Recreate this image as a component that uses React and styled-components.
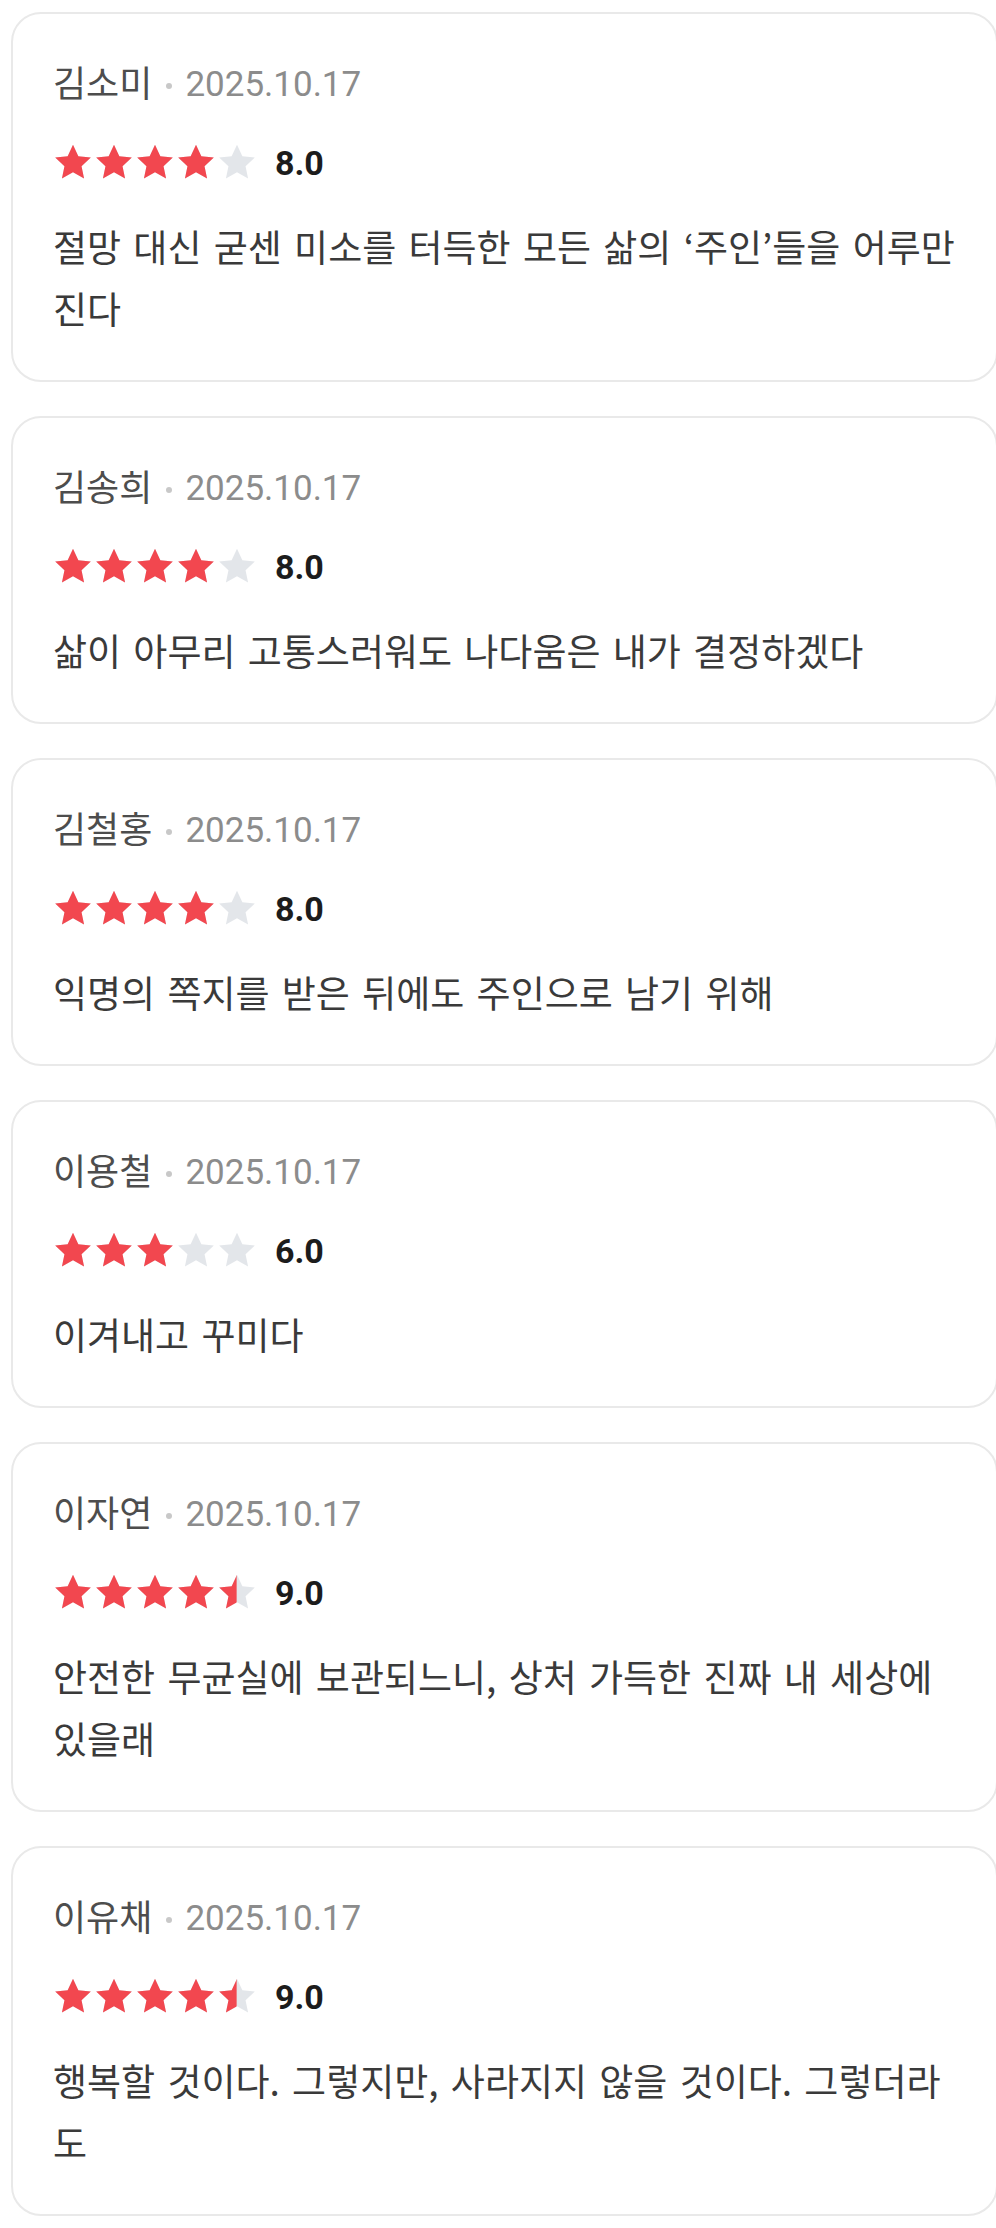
import React from "react";
import styled, { createGlobalStyle } from "styled-components";

const GlobalStyle = createGlobalStyle`
  html, body {
    margin: 0;
    padding: 0;
    background: #ffffff;
    overflow-x: hidden;
  }
  body {
    font-family: Roboto, "Noto Sans CJK KR", "Noto Sans", sans-serif;
  }
`;

const List = styled.div`
  display: flex;
  flex-direction: column;
  gap: 34px;
  padding: 12px 0 12px 11px;
`;

const Card = styled.div`
  width: 987px;
  box-sizing: border-box;
  padding: 48px 26px 41px 40px;
  border: 2px solid #e9e9e9;
  border-radius: 30px;
  background: #ffffff;
`;

const Meta = styled.div`
  display: flex;
  align-items: center;
  height: 46px;
  line-height: 46px;
`;

const Name = styled.span`
  font-size: 36px;
  color: #4d4d4d;
`;

const Dot = styled.span`
  width: 6px;
  height: 6px;
  margin: 2px 13px 0 14px;
  border-radius: 50%;
  background: #c8c8c8;
`;

const Date = styled.span`
  font-size: 35px;
  color: #8c8c8c;
`;

const RatingRow = styled.div`
  display: flex;
  align-items: center;
  height: 40px;
  margin-top: 35px;
`;

const Stars = styled.div`
  display: flex;
  gap: 1px;
`;

const Score = styled.span`
  margin-left: 18px;
  font-size: 34px;
  font-weight: 700;
  color: #1c1c1c;
`;

const Body = styled.p`
  margin: 32px 0 0;
  font-size: 37px;
  line-height: 62px;
  word-spacing: 4px;
  color: #3a3a3a;
  font-family: "Noto Sans CJK KR", "Noto Sans", sans-serif;
`;

const STAR_PATH =
  "M12 2l2.94 6.26 6.86.78-5.1 4.7 1.4 6.76L12 17.1l-6.1 3.4 1.4-6.76-5.1-4.7 6.86-.78z";

const Star = ({ fill, id }) => (
  <svg width="40" height="40" viewBox="1 1 22 22">
    <defs>
      <clipPath id={id}>
        <rect x="0" y="0" width={1.6 + 20.4 * fill} height="24" />
      </clipPath>
    </defs>
    <path d={STAR_PATH} fill="#e3e6ea" />
    {fill > 0 && <path d={STAR_PATH} fill="#f2474f" clipPath={`url(#${id})`} />}
  </svg>
);

const reviews = [
  {
    name: "김소미",
    score: 8.0,
    text: "절망 대신 굳센 미소를 터득한 모든 삶의 ‘주인’들을 어루만진다",
  },
  {
    name: "김송희",
    score: 8.0,
    text: "삶이 아무리 고통스러워도 나다움은 내가 결정하겠다",
  },
  {
    name: "김철홍",
    score: 8.0,
    text: "익명의 쪽지를 받은 뒤에도 주인으로 남기 위해",
  },
  { name: "이용철", score: 6.0, text: "이겨내고 꾸미다" },
  {
    name: "이자연",
    score: 9.0,
    text: "안전한 무균실에 보관되느니, 상처 가득한 진짜 내 세상에 있을래",
  },
  {
    name: "이유채",
    score: 9.0,
    text: "행복할 것이다. 그렇지만, 사라지지 않을 것이다. 그렇더라도",
  },
];

const Rating = ({ score, idx }) => {
  const stars = score / 2;
  return (
    <Stars>
      {[0, 1, 2, 3, 4].map((i) => {
        const fill = Math.max(0, Math.min(1, stars - i));
        return <Star key={i} fill={fill === 1 ? 1.05 : fill} id={`clip-${idx}-${i}`} />;
      })}
    </Stars>
  );
};

const App = () => (
  <>
    <GlobalStyle />
    <List>
      {reviews.map((r, idx) => (
        <Card key={idx}>
          <Meta>
            <Name>{r.name}</Name>
            <Dot />
            <Date>2025.10.17</Date>
          </Meta>
          <RatingRow>
            <Rating score={r.score} idx={idx} />
            <Score>{r.score.toFixed(1)}</Score>
          </RatingRow>
          <Body>{r.text}</Body>
        </Card>
      ))}
    </List>
  </>
);

export default App;
